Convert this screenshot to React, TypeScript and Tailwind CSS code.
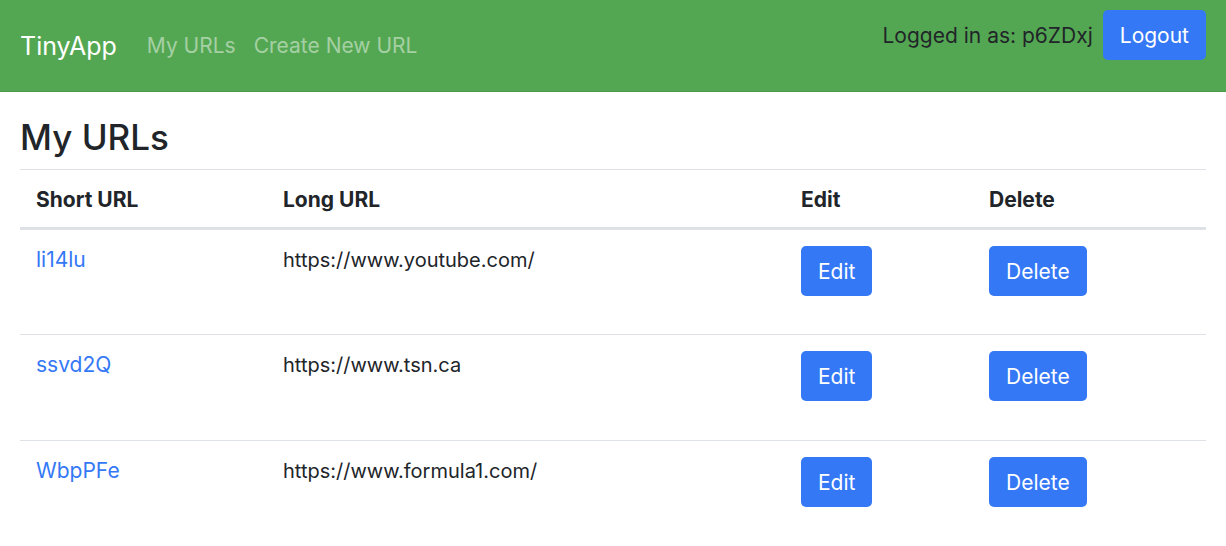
const urls = [
  { id: "li14lu", longURL: "https://www.youtube.com/" },
  { id: "ssvd2Q", longURL: "https://www.tsn.ca" },
  { id: "WbpPFe", longURL: "https://www.formula1.com/" },
];

const button =
  "h-[50px] rounded-[5px] bg-[#3478f6] px-[17px] pt-[2px] text-white hover:bg-[#2366dd]";

export default function App() {
  return (
    <div className="bg-white font-['Inter','Liberation_Sans',sans-serif] text-[21px] leading-8 text-[#212529]">
      <header className="flex items-start justify-between border-b border-[#4c9a4a] bg-[#54a752] px-5 pt-[10px] pb-[29px]">
        <nav className="flex items-center pt-5">
          <a href="#" className="text-[25px] leading-8 text-white">TinyApp</a>
          <a href="#" className="ml-[30px] text-[#a5d0a4]">My URLs</a>
          <a href="#" className="ml-[18px] text-[#a5d0a4]">Create New URL</a>
        </nav>
        <form className="flex items-center gap-[10px]">
          <span className="pt-[2px]">Logged in as: p6ZDxj</span>
          <button type="button" className={button}>Logout</button>
        </form>
      </header>
      <main className="px-5 pt-[23px]">
        <h3 className="pb-[10px] text-[35px] leading-[44px] font-medium">My URLs</h3>
        <table className="w-full table-fixed border-collapse text-left">
          <thead>
            <tr className="border-t border-b-3 border-[#dee2e6]">
              <th className="w-[247px] px-4 pt-[14px] pb-[11px] font-bold">Short URL</th>
              <th className="w-[518px] px-4 pt-[14px] pb-[11px] font-bold">Long URL</th>
              <th className="w-[188px] px-4 pt-[14px] pb-[11px] font-bold">Edit</th>
              <th className="w-[233px] px-4 pt-[14px] pb-[11px] font-bold">Delete</th>
            </tr>
          </thead>
          <tbody>
            {urls.map(({ id, longURL }) => (
              <tr key={id} className="h-[106px] border-t border-[#dee2e6] align-top">
                <td className="px-4 pt-[14px]">
                  <a href="#" className="text-[#3478f6]">{id}</a>
                </td>
                <td className="px-4 pt-[14px] text-[20px]">{longURL}</td>
                <td className="px-4 pt-4">
                  <button type="button" className={button}>Edit</button>
                </td>
                <td className="px-4 pt-4">
                  <button type="button" className={button}>Delete</button>
                </td>
              </tr>
            ))}
          </tbody>
        </table>
      </main>
    </div>
  );
}
